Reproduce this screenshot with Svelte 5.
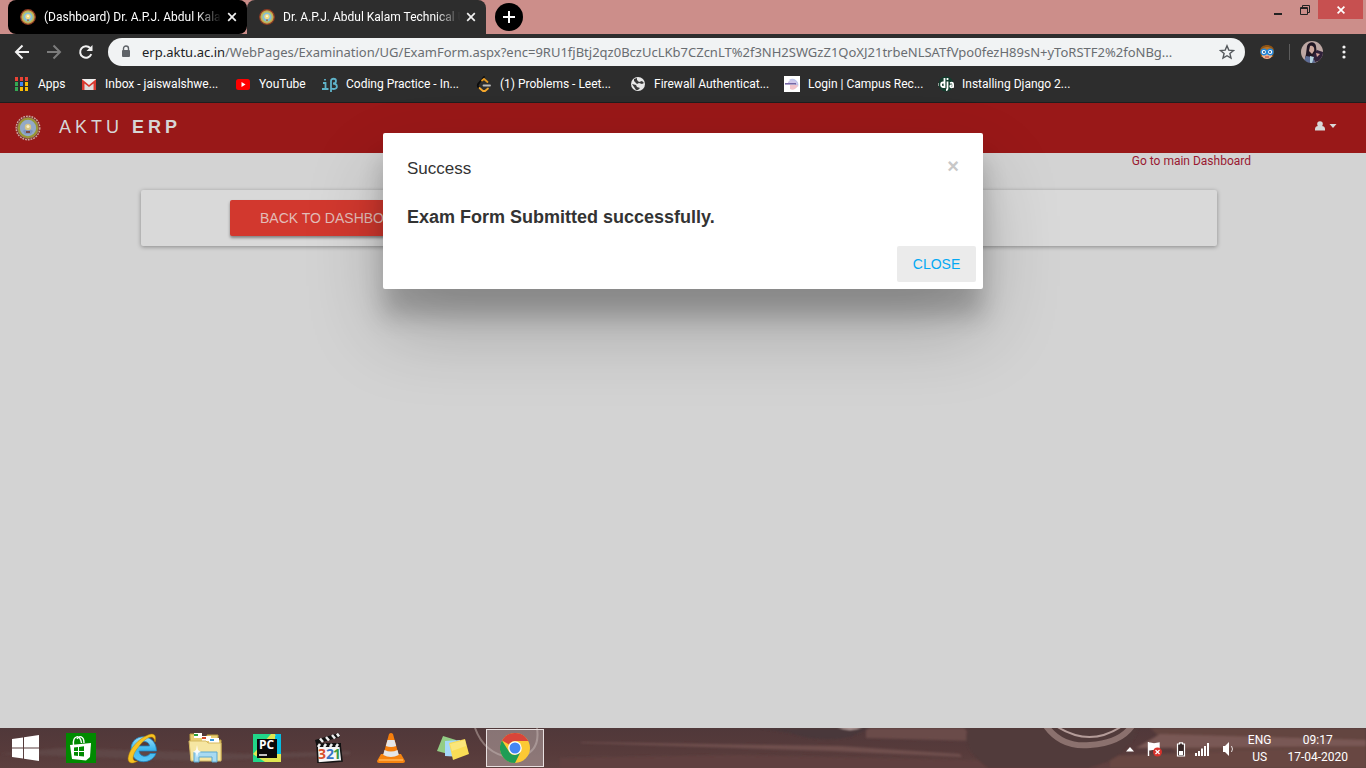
<script>
  const tabs = [
    { title: '(Dashboard) Dr. A.P.J. Abdul Kala', active: false },
    { title: 'Dr. A.P.J. Abdul Kalam Technical U', active: true }
  ];
  const bookmarks = [
    { icon: 'apps', text: 'Apps', size: 'tiny' },
    { icon: 'gmail', text: 'Inbox - jaiswalshwe...', size: 'wide' },
    { icon: 'youtube', text: 'YouTube', size: 'mid' },
    { icon: 'ib', text: 'Coding Practice - In...', size: 'wide' },
    { icon: 'leet', text: '(1) Problems - Leet...', size: 'wide' },
    { icon: 'globe', text: 'Firewall Authenticat...', size: 'wide' },
    { icon: 'campus', text: 'Login | Campus Rec...', size: 'wide' },
    { icon: 'django', text: 'Installing Django 2...', size: 'wide' }
  ];
  const appColors = ['#ea4335', '#ea4335', '#ea4335', '#34a853', '#4285f4', '#fbbc05', '#34a853', '#fbbc05', '#fbbc05'];
</script>

{#snippet seal(size)}
  <svg width={size} height={size} viewBox="0 0 26 26" aria-hidden="true">
    <circle cx="13" cy="13" r="11.800" fill="#6e2a22" stroke="#d0a8a4" stroke-width="1.400" stroke-dasharray="1.800 1" />
    <circle cx="13" cy="13" r="9.200" fill="#93a9c6" stroke="#98982f" stroke-width="2" />
    <circle cx="13" cy="13" r="10.400" fill="none" stroke="#b99a72" stroke-width=".6" />
    <path d="M8 16c1-2 9-2 10 0l-2 3h-6z" fill="#7d93c0" />
    <circle cx="13" cy="12" r="3.200" fill="#d8c584" />
    <circle cx="13" cy="11.600" r="1.500" fill="#f7efc9" />
    <path d="M11 16h4v2h-4z" fill="#7c4c42" />
  </svg>
{/snippet}

{#snippet favicon()}
  <svg width="16" height="16" viewBox="0 0 16 16" aria-hidden="true">
    <circle cx="8" cy="8" r="7.3" fill="#c9a24a" stroke="#8f3a24" stroke-width="1.200" />
    <circle cx="8" cy="8" r="5.200" fill="#86bfd8" stroke="#b9bf62" stroke-width="1.200" />
    <circle cx="8" cy="7.500" r="2.600" fill="#f3dc84" />
    <circle cx="8" cy="7.300" r="1" fill="#fffbe0" />
    <path d="M7 10.500h2v1.500H7z" fill="#a57a50" />
  </svg>
{/snippet}

<div class="screen">
  <header class="browser">
    <div class="tabstrip">
      {#each tabs as tab}
        <div class="tab" class:active={tab.active}>
          {@render favicon()}
          <span class="title">{tab.title}</span>
          <button class="plain" aria-label="Close tab">
            <svg width="10" height="10" viewBox="0 0 10 10"><path d="M1.2 1.2l7.6 7.6M8.8 1.2L1.2 8.8" stroke="#f1f1f1" stroke-width="1.7" /></svg>
          </button>
        </div>
      {/each}
      <button class="newtab" aria-label="New tab">
        <svg width="12" height="12" viewBox="0 0 12 12"><path d="M6 0v12M0 6h12" stroke="#fff" stroke-width="2" /></svg>
      </button>
      <div class="wincontrols">
        <button class="plain min" aria-label="Minimize"><svg width="8" height="12" viewBox="0 0 8 12"><path d="M0 9h8v2H0z" fill="#222" /></svg></button>
        <button class="plain max" aria-label="Restore"><svg width="10" height="10" viewBox="0 0 10 10" fill="none" stroke="#222"><path d="M2.5 2V.5h7v7H8" /><path d="M.5 2.5h7v7h-7zM.5 3.5h7" /></svg></button>
        <button class="plain winclose" aria-label="Close window"><svg width="8" height="8" viewBox="0 0 8 8"><path d="M.6.6l6.8 6.8M7.4.6L.6 7.4" stroke="#fff" stroke-width="1.7" /></svg></button>
      </div>
    </div>

    <div class="toolbar">
      <button class="plain" aria-label="Back"><svg width="16" height="16" viewBox="0 0 16 16" fill="none" stroke="#f1f1f1" stroke-width="2"><path d="M15 8H2.5M8.5 1.5L2 8l6.500 6.500" /></svg></button>
      <button class="plain" aria-label="Forward"><svg width="16" height="16" viewBox="0 0 16 16" fill="none" stroke="#7c7c7c" stroke-width="2"><path d="M1 8h12.500M7.500 1.500L14 8l-6.500 6.500" /></svg></button>
      <button class="plain" aria-label="Reload"><svg width="16" height="16" viewBox="0 0 16 16"><path d="M13.300 10.200A5.800 5.800 0 1 1 12.200 4" fill="none" stroke="#f1f1f1" stroke-width="2" /><path d="M14.500 1v6h-6z" fill="#f1f1f1" /></svg></button>
      <div class="omnibox">
        <svg width="10" height="14" viewBox="0 0 10 14" aria-hidden="true"><rect x="1" y="5" width="8" height="7" rx="1" fill="#5f6368" /><path d="M2.500 5.500V3.500a2.500 2.500 0 0 1 5 0v2" fill="none" stroke="#5f6368" stroke-width="1.400" /></svg>
        <a class="url" href="#top"><b>erp.aktu.ac.in</b>/WebPages/Examination/UG/ExamForm.aspx?enc=9RU1fjBtj2qz0BczUcLKb7CZcnLT%2f3NH2SWGzZ1QoXJ21trbeNLSATfVpo0fezH89sN+yToRSTF2%2foNBg...</a>
        <button class="plain" aria-label="Bookmark this page"><svg width="16" height="16" viewBox="0 0 16 16"><path d="M8 1.800l1.800 4.300 4.700.4-3.600 3 1.100 4.600L8 11.700l-4 2.400 1.100-4.600-3.600-3 4.700-.4z" fill="none" stroke="#54585c" stroke-width="1.400" /></svg></button>
      </div>
      <div class="extras">
        <svg width="16" height="16" viewBox="0 0 16 16" aria-hidden="true"><path d="M1 7c0-8 14-8 14 0l-1 6H2z" fill="#8f5414" /><path d="M3 8h10v4c-1 4-9 4-10 0z" fill="#f0b48c" /><path d="M2 6c3-4 9-4 12 0l-1 2H3z" fill="#b97426" /><circle cx="4.800" cy="8" r="2.800" fill="#fff" stroke="#1f86dc" stroke-width="1.400" /><circle cx="11.200" cy="8" r="2.800" fill="#fff" stroke="#1f86dc" stroke-width="1.400" /><circle cx="5" cy="8" r="1" fill="#1b4f86" /><circle cx="11" cy="8" r="1" fill="#1b4f86" /><path d="M6 13h4" stroke="#a33" /></svg>
        <span class="divider"></span>
        <svg width="22" height="22" viewBox="0 0 22 22" aria-hidden="true">
          <defs><clipPath id="face"><circle cx="11" cy="11" r="11" /></clipPath></defs>
          <g clip-path="url(#face)"><path d="M0 0h22v22H0z" fill="#bda7a3" /><path d="M6 5c2-5 8-5 9 0l1 9-4 8H3l2-9z" fill="#211724" /><path d="M9 5c3-1 5 2 4 5l-2 3-3-3z" fill="#cda79c" /><path d="M2 22l3-7 6 1 4 6z" fill="#5c6c95" /><path d="M12 14l4-5 6 2v8l-8 2z" fill="#30213a" /><path d="M9 15l4 1-2 6H9z" fill="#b4d2df" /><path d="M15 12l4 1-3 3z" fill="#d2a39b" /></g>
        </svg>
        <button class="plain" aria-label="Menu"><svg width="4" height="14" viewBox="0 0 4 14" fill="#f1f1f1"><circle cx="2" cy="2" r="1.600" /><circle cx="2" cy="7" r="1.600" /><circle cx="2" cy="12" r="1.600" /></svg></button>
      </div>
    </div>

    <nav class="bookmarks" aria-label="Bookmarks">
      {#each bookmarks as b}
        <a class={b.size} href="#top">
          <svg width="16" height="16" viewBox="0 0 16 16" aria-hidden="true">
            {#if b.icon === 'apps'}
              {#each appColors as c, i}<rect x={1 + (i % 3) * 5} y={1 + Math.floor(i / 3) * 5} width="3" height="4" fill={c} />{/each}
            {:else if b.icon === 'gmail'}
              <path d="M1 3h14v11H1z" fill="#eee" /><path d="M3.500 6L8 10l4.500-4v8h-9z" fill="#dcdcdc" /><path d="M1 14V3.300L8 9l7-5.700V14h-2.500V7.500L8 11 3.500 7.500V14z" fill="#d93a30" />
            {:else if b.icon === 'youtube'}
              <rect x="1" y="3" width="14" height="11" rx="2.500" fill="#f00" /><path d="M6.500 6v5l4-2.500z" fill="#fff" />
            {:else if b.icon === 'ib'}
              <g fill="none" stroke="#5fb3c9" stroke-width="1.800"><path d="M3 3v1.500M1 7h2.500v6M0 13h6.500M9 16V5c0-3 5-3 5 0 0 2-1.500 2.500-3 2.500 5 0 5 5.500 1 5.500-1.500 0-3-.5-3-1.500" /></g>
            {:else if b.icon === 'leet'}
              <g fill="none" stroke-linecap="round" stroke-width="1.800"><path d="M8 1L3 7c-2 2-1 4 0 5" stroke="#0c0c0c" /><path d="M6 4.500l2-1.500 3.500 3" stroke="#e69a20" /><path d="M3.500 12l3.500 3h2l3-2.500" stroke="#f4a72c" /><path d="M7.500 9.500H14" stroke="#bbb" /></g>
            {:else if b.icon === 'globe'}
              <circle cx="8" cy="8" r="7" fill="#e8e8e8" /><path d="M4 3l3-1v2l2 2 3-1 2 2-2 1-3-1-2 1-3-3zM2 8l4 1 1 2 3 1-2 2H6z" fill="#3a3a3a" />
            {:else if b.icon === 'campus'}
              <path d="M0 0h16v16H0z" fill="#fff" /><path d="M5 4a6 6 0 0 1 9 7l-2-2z" fill="#bcc4ea" /><path d="M4 6c3-3 8-2 10 2H4z" fill="#cfc8ea" /><path d="M6 9h8a5.500 5.500 0 0 1-8 4z" fill="#f1c4cb" /><path d="M1 7h11v1.600H1z" fill="#7667a5" />
            {:else}
              <circle cx="8" cy="8" r="7.500" fill="#123d2d" /><g fill="none" stroke="#fff" stroke-width="1.800"><path d="M6.500 2v9H4.800C2.500 11 2.500 6.500 5 6.500h1.500M9.500 5.500V12c0 1.500-.5 2-1.500 2M9.500 2v2M12 7c3-1 3.200 0 3.200 4-3 1-4-1-1.500-2.300" /></g><path d="M0 7v3" stroke="#fff" />
            {/if}
          </svg>
          <span>{b.text}</span>
        </a>
      {/each}
    </nav>
  </header>

  <div class="site" id="top">
    <header class="appbar">
      {@render seal(26)}
      <span class="brand">AKTU <b>ERP</b></span>
      <button class="plain user" aria-label="Account">
        <svg width="22" height="10" viewBox="0 0 22 10" fill="#d8d8d8"><circle cx="5" cy="3" r="2.800" /><path d="M0 9.500V8c0-2 1.500-3 3-3h4c1.500 0 3 1 3 3v1.500z" /><path d="M14.500 3h7L18 7z" /></svg>
      </button>
    </header>
    <main>
      <a class="dash" href="#top">Go to main Dashboard</a>
      <section class="card">
        <button class="back">BACK TO DASHBOARD</button>
      </section>
    </main>

    <div class="modal" role="dialog" aria-labelledby="dlg">
      <div class="head">
        <h4 id="dlg">Success</h4>
        <button class="plain x" aria-label="Dismiss">×</button>
      </div>
      <p>Exam Form Submitted successfully.</p>
      <div class="foot"><button class="close">CLOSE</button></div>
    </div>
  </div>

  <footer class="taskbar">
    <svg class="wall" viewBox="0 0 1366 40" preserveAspectRatio="xMidYMid slice" aria-hidden="true">
      <defs>
        <linearGradient id="wood" x1="0" y1="0" x2="0" y2="1"><stop offset="0" stop-color="#50383a" /><stop offset=".6" stop-color="#573b3b" /><stop offset="1" stop-color="#5c403f" /></linearGradient>
        <filter id="soft" x="-5%" y="-20%" width="110%" height="140%"><feGaussianBlur stdDeviation="1.200" /></filter>
      </defs>
      <path d="M0 0h1366v40H0z" fill="url(#wood)" />
      <g filter="url(#soft)">
        <path d="M0 26l60-6 190 6 100-3v4l-150 6z" fill="#5f4746" />
        <path d="M580 14l260 4 120 8 2 3-130-6-250-8z" fill="#6f4f4e" />
        <path d="M560 30l180-3 220 5 406 8H560z" fill="#60413f" />
        <path d="M866 0h98l12 13-110-3z" fill="#6b4b48" />
        <path d="M760 0h110l-20 9q-30 6-60-4z" fill="#49373a" />
        <path d="M838-1h24q-12 6-24 0z" fill="#b8a09e" />
        <path d="M1150 0h216v22l-190 2z" fill="#644540" />
        <path d="M1160 6l206 6v6l-230 2z" fill="#795854" />
        <path d="M1110 28l256-10v22h-256z" fill="#674742" />
        <path d="M968 0h170q-8 30-50 40h-100q-28-20-20-40z" fill="#513a3a" />
      </g>
      <path d="M1046-2q16 22 44 19 30-2 42-19" fill="none" stroke="#8b716e" stroke-width="6" />
      <path d="M1056-2q34 22 66 0" fill="none" stroke="#b49c99" stroke-width="2" />
      <path d="M475 0q10 28 40 30 26-4 22-30" fill="none" stroke="#8b7674" stroke-width="2" />
    </svg>
    <button class="plain start" aria-label="Start"><svg width="27" height="26" viewBox="0 0 27 26" fill="#fff"><path d="M0 4l11-1.600V12.500H0zM12 2.200L27 0v12.500H12zM0 13.500h11v10L0 22zM12 13.500h15V26l-15-2.200z" /></svg></button>
    <button class="plain task" aria-label="Store"><svg width="30" height="30" viewBox="0 0 30 30"><path d="M0 0h30v30H0z" fill="#008a00" /><path d="M7.500 12c-1-10 7-11 8-2M11 6c2-4 7-3 7 4" fill="none" stroke="#fff" stroke-width="1.400" /><path d="M4 12l21-2-1 14-4 3.500L6 26z" fill="#fff" /><path d="M8 14.500l4-.5v4H8zM13 13.900l5-.6V18h-5zM8 19h4v4l-4-.4zM13 19h5v4.600l-5-.5z" fill="#008a00" /></svg></button>
    <button class="plain task" aria-label="Internet Explorer"><svg width="32" height="32" viewBox="0 0 32 32"><defs><linearGradient id="ie" x1="0" y1="0" x2="0" y2="1"><stop offset="0" stop-color="#9de0fb" /><stop offset=".5" stop-color="#3db7ee" /><stop offset="1" stop-color="#5cc8f5" /></linearGradient></defs><path d="M29.500 19H12c.5 6 8.500 7 11 2.500h6C24 34 4 32 4 17 4 1 29 0 29.500 19zM12 14h10.500c-.5-6-10-6-10.500 0z" fill="url(#ie)" stroke="#1c85c4" stroke-width=".8" /><path d="M28 10C30 2 26 1 21 3 11 7 3 17 1.500 24c-2 7 3 9 9 5-7 1-5-7 1-14C17 7 27 0 28 10z" fill="#f7c322" stroke="#b98205" stroke-width=".5" /></svg></button>
    <button class="plain task" aria-label="File Explorer"><svg width="34" height="32" viewBox="0 0 34 32"><path d="M2 5V2h9l2 3h6V3h11v5h3v20H3z" fill="#e9cf74" stroke="#b99b3f" /><path d="M6 1h8v5H6zM14 4h9v5h-9zM21 6h10v5H21z" fill="#fff" /><path d="M6 2h4v2H6z" fill="#2aa33a" /><path d="M14 5h4v2h-4z" fill="#d34b2b" /><path d="M22 7h4v2h-4z" fill="#3a9bdc" /><path d="M1 9h17l2 2h13v18H3z" fill="#f6e6a2" stroke="#d5b961" /><path d="M6 30V20h23v10h-5v-5H11v5z" fill="#a8daf2" stroke="#5ba8cf" /><path d="M9 13l1 5 3 2-3 1-1 5-1-5-3-1 3-2z" fill="#fff" opacity=".9" /></svg></button>
    <button class="plain task" aria-label="PyCharm"><svg width="28" height="28" viewBox="0 0 28 28"><path d="M0 0h28v28H0z" fill="#21d789" /><path d="M18 0h10v20l-8 2z" fill="#07bce0" /><path d="M0 20l18-20h4L28 20v8H12z" fill="#dfe651" /><path d="M22 2h6v18h-6z" fill="#07bce0" /><path d="M4 5h20v19H4z" fill="#090909" /><path d="M6 21h8" stroke="#fff" stroke-width="1.500" /><text x="6" y="15" font-family="Open Sans, sans-serif" font-size="12" font-weight="700" fill="#fff">PC</text></svg></button>
    <button class="plain task" aria-label="Media Player Classic"><svg width="30" height="30" viewBox="0 0 30 30"><path d="M3 11h23l2 17-24 2z" fill="#f7f7f7" stroke="#151515" stroke-width="1.600" /><path d="M1 7L25 0l1 4L2 11z" fill="#111" /><path d="M6 5.500l3 3.500M12 4l3 3.500M18 2l3 3.500M23 .5l2 3" stroke="#eee" stroke-width="2.500" /><path d="M2 11l25-1v4H3z" fill="#111" /><path d="M6 11l-2 3M12 11l-2 3M18 11l-2 3M24 11l-2 3" stroke="#eee" stroke-width="2.500" /><g font-family="Open Sans, sans-serif" font-size="14" font-weight="700"><text x="4" y="26" fill="#d9502e">3</text><text x="12" y="26" fill="#3a75c4">2</text><text x="19" y="26" fill="#3c9a3f">1</text></g></svg></button>
    <button class="plain task" aria-label="VLC media player"><svg width="28" height="30" viewBox="0 0 28 30"><path d="M4 21h20l4 7q0 2-2 2H2q-2 0-2-2z" fill="#f58410" /><path d="M2 27h24" stroke="#ffa843" stroke-width="2" /><path d="M12 1q2-2 4 0l6 22q-8 5-16 0z" fill="#f57f0d" /><path d="M10.500 7h7l1.700 6q-5 2-10.400 0zM7.500 17q6.500 3 13 0l1.300 5q-8 4-15.600 0z" fill="#e4e6e9" /></svg></button>
    <button class="plain task" aria-label="Sticky Notes"><svg width="32" height="26" viewBox="0 0 32 26"><path d="M6 1l13 4-4 15-15-4z" fill="#93cd85" /><path d="M8 6l15-1 1 17-16-1z" fill="#a5d8fa" /><path d="M12 8l16-4 4 15-16 6z" fill="#f9dd55" /><path d="M13 9l15-4 1 6-14 5z" fill="#fbe98c" opacity=".7" /></svg></button>
    <div class="task"><button class="plain current" aria-label="Google Chrome"><svg width="30" height="30" viewBox="0 0 30 30"><circle cx="15" cy="15" r="15" fill="#fcc934" /><path d="M2 7.500a15 15 0 0 1 26 0L28 8H15a7 7 0 0 0-6 3.500z" fill="#d9453a" /><path d="M2 7.500l6.900 11A7 7 0 0 0 15 22l5-2-5 10A15 15 0 0 1 2 7.500z" fill="#1f9d55" /><circle cx="15" cy="15" r="6.800" fill="#fff" /><circle cx="15" cy="15" r="5.500" fill="#4486f4" /></svg></button></div>

    <div class="tray">
      <div class="status">
        <svg width="8" height="5" viewBox="0 0 8 5" aria-hidden="true"><path d="M0 4.500h8L4 0z" fill="#fff" /></svg>
        <svg width="16" height="16" viewBox="0 0 16 16" aria-hidden="true"><path d="M1.500 1v14M2 2l5 1 5-1v7l-5-1-5 1z" fill="#fff" stroke="#fff" stroke-width="1.400" /><circle cx="10.500" cy="11" r="4.500" fill="#d8322b" /><path d="M8.500 9l4 4M12.500 9l-4 4" stroke="#fff" stroke-width="1.200" /></svg>
        <svg width="10" height="15" viewBox="0 0 10 15" aria-hidden="true"><path d="M3.500 2V.8h3V2h2v12h-7V2z" fill="#382828" stroke="#fff" stroke-width="1.200" /><path d="M3 9h4v4H3z" fill="#fff" /></svg>
      </div>
      <svg width="16" height="13" viewBox="0 0 16 13" aria-hidden="true"><path d="M1 10h2v3H1zM4 8h2v5H4zM7 5.500h2V13H7zM10 3h2v10h-2zM13 0h2v13h-2z" fill="#fff" /></svg>
      <svg width="14" height="14" viewBox="0 0 14 14" aria-hidden="true"><path d="M1 4h2l4-4v14l-4-4H1z" fill="#fff" /><path d="M9.500 4q2 3 0 6" fill="none" stroke="#e8e0e0" /></svg>
      <div class="lang"><span>ENG</span><span>US</span></div>
      <div class="clock"><span>09:17</span><span>17-04-2020</span></div>
    </div>
  </footer>
</div>

<style>
  :global(body) { margin: 0; }
  .screen { display: flex; flex-direction: column; min-height: 100vh; background: #d3d3d3; font-family: Roboto, sans-serif; overflow: hidden; }
  .screen :global(*) { box-sizing: border-box; }
  svg { display: block; flex: none; }
  a { color: inherit; text-decoration: none; }
  .plain { border: 0; background: none; padding: 0; display: flex; align-items: center; justify-content: center; flex: none; }

  .browser { background: #2d2d2d; color: #fff; font-size: 12px; border-bottom: 1px solid #1e1e1e; }
  .tabstrip { display: flex; height: 34px; background: #cc8e8a; padding-left: 8px; }
  .tab { display: flex; align-items: center; width: 239px; height: 34px; padding: 0 10px 0 12px; border-radius: 8px; background: #000; }
  .tab.active { background: #2d2d2d; border-radius: 8px 8px 0 0; }
  .title { flex: 1; min-width: 0; margin: 0 2px 0 8px; overflow: hidden; white-space: nowrap; mask-image: linear-gradient(90deg, #000 84%, transparent 98%); }
  .newtab { width: 28px; height: 28px; margin: 3px 0 0 9px; padding: 0; border: 0; border-radius: 50%; background: #000; display: flex; align-items: center; justify-content: center; }
  .wincontrols { margin-left: auto; display: flex; height: 19px; padding-right: 3px; }
  .min { width: 26px; }
  .max { width: 27px; }
  .winclose { width: 45px; background: #c75050; }

  .toolbar { display: flex; align-items: center; gap: 16px; height: 36px; padding: 0 20px 0 14px; }
  .omnibox { flex: 1; min-width: 0; display: flex; align-items: center; gap: 11px; height: 28px; margin-left: -2px; padding: 0 10px 0 13px; border-radius: 14px; background: #f1f3f4; color: #696d71; font-size: 13px; font-family: "Noto Sans", "Open Sans", sans-serif; }
  .url { flex: 1; min-width: 0; overflow: hidden; white-space: nowrap; }
  .url b { font-weight: 400; color: #202124; }
  .extras { display: flex; align-items: center; gap: 11px; margin-left: -2px; }
  .extras button { margin-left: 8px; }
  .divider { width: 1px; height: 16px; background: #5c5c5c; margin-left: 3px; }

  .bookmarks { display: flex; height: 32px; padding: 0 0 4px 14px; }
  .bookmarks a { display: flex; align-items: center; gap: 8px; white-space: nowrap; }
  .tiny { width: 67px; }
  .mid { width: 87px; }
  .wide { width: 154px; }

  .site { flex: 1; position: relative; font-family: "Liberation Sans", Arial, sans-serif; }
  .appbar { display: flex; align-items: center; height: 50px; padding: 0 29px 0 15px; background: #991818; color: #d6d6d6; }
  .brand { margin: 0 0 2px 18px; font-size: 18px; letter-spacing: 4px; line-height: 20px; }
  .user { margin: 0 0 4px auto; }
  main { display: flex; flex-direction: column; padding: 0 149px 0 141px; }
  .dash { align-self: flex-end; margin-right: -34px; font-family: Roboto, sans-serif; font-size: 12px; line-height: 16px; color: #991830; }
  .card { margin-top: 21px; height: 56px; padding: 10px 89px; border-radius: 2px; background: #d9d9d9; box-shadow: 0 1px 4px rgba(0, 0, 0, .35); }
  .back { height: 36px; padding: 0 30px; border: 0; border-radius: 2px; background: #d2382e; color: #e3bdb8; font: 14px/20px "Liberation Sans", Arial, sans-serif; box-shadow: 0 2px 3px rgba(0, 0, 0, .4); }

  .modal { position: absolute; top: 30px; left: 50%; width: 600px; max-width: 100%; transform: translateX(-50%); padding: 24px 7px 7px 24px; background: #fff; border-radius: 2px; color: #333; box-shadow: 0 27px 24px rgba(0, 0, 0, .2), 0 40px 77px rgba(0, 0, 0, .22); }
  .head { display: flex; justify-content: space-between; padding-right: 17px; }
  h4 { margin: 0; font-size: 17px; line-height: 24px; font-weight: 400; }
  .x { height: 18px; font: bold 20px/18px "Liberation Sans", Arial, sans-serif; color: #c8c8c8; }
  p { margin: 24px 0 0; font-size: 18px; line-height: 24px; font-weight: 700; }
  .foot { display: flex; justify-content: flex-end; padding-top: 17px; }
  .close { width: 79px; height: 36px; padding: 0; border: 0; border-radius: 2px; background: #ebebeb; color: #03a9f4; font: 14px/20px "Liberation Sans", Arial, sans-serif; }

  .taskbar { position: relative; display: flex; height: 40px; overflow: hidden; color: #fff; font-size: 12px; }
  .wall { position: absolute; inset: 0; width: 100%; height: 100%; }
  .taskbar > button, .taskbar > div { position: relative; }
  .start { width: 50px; }
  .task { width: 62px; display: flex; align-items: center; justify-content: center; }
  .current { width: 58px; height: 38px; border: 1px solid #e8e0e0; background: rgba(205, 190, 190, .45); }
  .tray { display: flex; align-items: center; gap: 12px; margin-left: auto; padding: 2px 18px 0 0; line-height: 17px; }
  .status { display: flex; align-items: center; gap: 13px; margin-right: -4px; }
  .lang, .clock { display: flex; flex-direction: column; align-items: center; }
  .clock { margin-left: 4px; }
</style>
